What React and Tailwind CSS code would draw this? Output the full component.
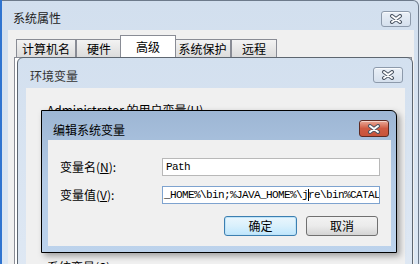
const cjk = { fontFamily: '"Noto Sans CJK SC", "Noto Sans", sans-serif' }
const mono = { fontFamily: '"Liberation Mono", "DejaVu Sans Mono", monospace' }

function CloseGlyph() {
  return (
    <svg width="14" height="10" viewBox="0 0 14 10">
      <path d="M3 2 L11 8 M11 2 L3 8" stroke="#4b5563" strokeWidth="4" strokeLinecap="round" />
      <path d="M3 2 L11 8 M11 2 L3 8" stroke="#ffffff" strokeWidth="2" strokeLinecap="round" />
    </svg>
  )
}

function CloseButton({ active, className }) {
  return (
    <div
      className={
        active
          ? 'flex items-center justify-center rounded-[3px] border border-[#5e2a22] bg-gradient-to-b from-[#e9a998] via-[#cf5a42] to-[#c8533a] shadow-[inset_0_1px_0_rgba(255,255,255,0.5)] ' + className
          : 'flex items-center justify-center rounded-[3px] border border-[#8d9aab] bg-gradient-to-b from-[#eaf0f7] to-[#d5e0ed] shadow-[inset_0_1px_0_rgba(255,255,255,0.7)] ' + className
      }
    >
      <CloseGlyph />
    </div>
  )
}

function Tab({ label, w, selected }) {
  if (selected) {
    return (
      <div
        className={`${w} -mx-[2px] h-[22px] z-10 flex items-center justify-center border border-b-0 border-[#898c95] bg-white text-[12px] text-black`}
      >
        {label}
      </div>
    )
  }
  return (
    <div
      className={`${w} h-[18px] flex items-center justify-center border border-b-0 border-[#898c95] bg-gradient-to-b from-[#f3f3f3] to-[#dcdcdc] text-[12px] text-black`}
    >
      {label}
    </div>
  )
}

export default function App() {
  return (
    <div className="relative w-[420px] h-[264px] overflow-hidden bg-[#dfe8f3]" style={cjk}>
      {/* desktop edge */}
      <div className="absolute left-0 top-0 w-[2px] h-full bg-[#2f74d0]" />

      {/* 系统属性 */}
      <div className="absolute left-[2px] top-0 w-[417px] h-[290px] flex flex-col rounded-tr-[6px] border border-l-0 border-[#6d7a8b] bg-gradient-to-b from-[#d2dfee] to-[#dde8f4]">
        <div className="h-[29px] flex items-start justify-between pl-[11px] pr-[7px]">
          <span className="mt-[10px] text-[12px] leading-[14px] text-[#222]">系统属性</span>
          <CloseButton className="mt-[10px] w-[30px] h-[16px]" />
        </div>
        <div className="flex-1 ml-[6px] mr-[4px] bg-[#f0f0f0] flex flex-col">
          <div className="h-[27px] flex items-end pl-[8px]">
            <Tab label="计算机名" w="w-[60px]" />
            <Tab label="硬件" w="w-[46px]" />
            <Tab label="高级" w="w-[56px]" selected />
            <Tab label="系统保护" w="w-[57px]" />
            <Tab label="远程" w="w-[46px]" />
          </div>
          <div className="flex-1 ml-[6px] mr-[2px] border border-[#898c95] bg-white" />
        </div>
      </div>

      {/* 环境变量 */}
      <div className="absolute left-[17px] top-[57px] w-[396px] h-[240px] flex flex-col rounded-t-[6px] border border-[#5d6670] bg-gradient-to-b from-[#d3e0ef] to-[#e0e9f4]">
        <div className="h-[30px] flex items-start justify-between pl-[12px] pr-[9px]">
          <span className="mt-[11px] text-[12px] leading-[14px] text-[#333]">环境变量</span>
          <CloseButton className="mt-[9px] w-[30px] h-[16px]" />
        </div>
        <div className="flex-1 ml-[8px] mr-[7px] bg-[#f0f0f0] flex flex-col pl-[21px]">
          <span className="mt-[15px] text-[12px] leading-[14px] text-black">Administrator 的用户变量(U)</span>
          <span className="mt-[143px] text-[12px] leading-[14px] text-black">系统变量(S)</span>
        </div>
      </div>

      {/* 编辑系统变量 */}
      <div className="absolute left-[41px] top-[110px] w-[356px] h-[143px] flex flex-col rounded-tr-[6px] border border-black bg-gradient-to-b from-[#9db6d4] via-[#b4cbe6] to-[#bdd3ec] shadow-[3px_3px_6px_rgba(0,0,0,0.35)]">
        <div className="h-[29px] flex items-start justify-between pl-[11px] pr-[7px]">
          <span className="mt-[12px] text-[12px] leading-[14px] text-black">编辑系统变量</span>
          <CloseButton active className="mt-[9px] w-[30px] h-[17px]" />
        </div>
        <div className="flex-1 ml-[6px] mr-[5px] mb-[6px] bg-[#f0f0f0] flex flex-col pt-[18px] pl-[12px]">
          <div className="h-[18px] flex items-center">
            <span className="w-[102px] text-[12px] text-black">
              变量名(<span className="underline">N</span>):
            </span>
            <div className="w-[218px] h-[18px] border border-[#b8b8b8] bg-white flex items-center pl-[3px] text-[11px] tracking-[-0.6px] text-black" style={mono}>
              Path
            </div>
          </div>
          <div className="h-[18px] mt-[10px] flex items-center">
            <span className="w-[102px] text-[12px] text-black">
              变量值(<span className="underline">V</span>):
            </span>
            <div className="relative w-[218px] h-[18px] border border-[#7ea3cf] bg-white flex items-center overflow-hidden pl-[1px] text-[11px] tracking-[-0.6px] text-black whitespace-nowrap" style={mono}>
              _HOME%\bin;%JAVA_HOME%\jre\bin%CATAL
              <div className="absolute left-[145px] top-[2px] w-[1px] h-[12px] bg-black" />
            </div>
          </div>
          <div className="mt-[12px] flex pl-[164px] gap-[9px]">
            <div className="w-[73px] h-[20px] rounded-[3px] border border-[#3c7fb1] bg-gradient-to-b from-[#eaf6fd] via-[#d9f0fc] to-[#bee6fd] shadow-[inset_0_0_0_1px_#bfe3f7] flex items-center justify-center text-[12px] text-black">
              确定
            </div>
            <div className="w-[72px] h-[20px] rounded-[3px] border border-[#707070] bg-gradient-to-b from-[#f2f2f2] via-[#ebebeb] to-[#d4d4d4] flex items-center justify-center text-[12px] text-black">
              取消
            </div>
          </div>
        </div>
      </div>
    </div>
  )
}
